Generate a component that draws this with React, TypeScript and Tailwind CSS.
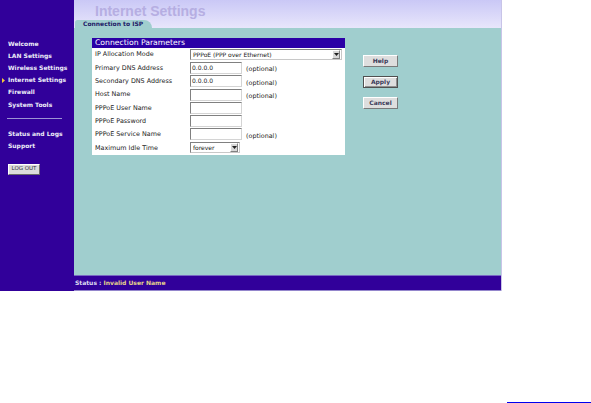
import React from "react";

type Row = {
  label: string;
  kind: "wide" | "input" | "small";
  value?: string;
  optional?: boolean;
};

const rows: Row[] = [
  { label: "IP Allocation Mode", kind: "wide", value: "PPPoE (PPP over Ethernet)" },
  { label: "Primary DNS Address", kind: "input", value: "0.0.0.0", optional: true },
  { label: "Secondary DNS Address", kind: "input", value: "0.0.0.0", optional: true },
  { label: "Host Name", kind: "input", value: "", optional: true },
  { label: "PPPoE User Name", kind: "input", value: "" },
  { label: "PPPoE Password", kind: "input", value: "" },
  { label: "PPPoE Service Name", kind: "input", value: "", optional: true },
  { label: "Maximum Idle Time", kind: "small", value: "forever" },
];

const nav1 = ["Welcome", "LAN Settings", "Wireless Settings", "Internet Settings", "Firewall", "System Tools"];
const nav2 = ["Status and Logs", "Support"];

function Arrow() {
  return (
    <div className="ml-auto mr-[1px] flex h-[9px] w-[8px] items-center justify-center border border-t-white border-l-white border-b-[#808080] border-r-[#808080] bg-[#d8d8d8]">
      <svg width="5" height="3" viewBox="0 0 5 3">
        <path d="M0 0 L5 0 L2.5 3 Z" fill="#202020" />
      </svg>
    </div>
  );
}

function Field({ row }: { row: Row }) {
  if (row.kind === "wide" || row.kind === "small") {
    return (
      <div
        className={
          (row.kind === "wide" ? "w-[152px]" : "w-[50px]") +
          " flex h-[11px] items-center border border-t-[#808080] border-l-[#808080] border-b-[#c8c8c8] border-r-[#c8c8c8] bg-white pl-[2px] text-[6px] leading-none text-[#202020]"
        }
      >
        <span>{row.value}</span>
        <Arrow />
      </div>
    );
  }
  return (
    <div className="flex h-[12px] w-[52px] items-center border border-t-[#808080] border-l-[#808080] border-b-[#d4d4d4] border-r-[#d4d4d4] bg-white pl-[1px] text-[6px] leading-none text-[#202020]">
      {row.value}
    </div>
  );
}

function Btn({ label, primary }: { label: string; primary?: boolean }) {
  return (
    <div
      className={
        "flex h-[12px] w-[35px] items-center justify-center bg-[#dedede] text-[6px] font-bold leading-none text-[#3a3a58] " +
        (primary
          ? "border border-[#505050] shadow-[inset_1px_1px_0_#ffffff,inset_-1px_-1px_0_#909090]"
          : "border border-t-white border-l-white border-b-[#7a7a7a] border-r-[#7a7a7a]")
      }
    >
      {label}
    </div>
  );
}

export default function App() {
  return (
    <div className="relative h-[403px] w-[591px] overflow-hidden bg-white font-['DejaVu_Sans',sans-serif]">
      <div className="flex h-[291px] w-[502px]">
        {/* Sidebar */}
        <div className="flex h-full w-[74px] flex-col bg-[#31009a] pt-[37.5px] text-[6px] font-bold text-[#ececf8]">
          {nav1.map((n) => (
            <div key={n} className="relative flex h-[12.2px] items-center pl-[8px] leading-none">
              {n === "Internet Settings" && (
                <svg className="absolute left-[2px] top-[3.6px]" width="3" height="5" viewBox="0 0 3 5">
                  <path d="M0 0 L3 2.5 L0 5 Z" fill="#f2c83a" />
                </svg>
              )}
              {n}
            </div>
          ))}
          <div className="ml-[7px] mt-[7px] h-[1px] w-[55px] bg-[#9c94d4]" />
          <div className="mt-[9.5px]">
            {nav2.map((n) => (
              <div key={n} className="flex h-[12.2px] items-center pl-[8px] leading-none">
                {n}
              </div>
            ))}
          </div>
          <div className="ml-[8px] mt-[11px] flex h-[11px] w-[32px] items-center justify-center border border-t-white border-l-white border-b-[#6a6a6a] border-r-[#6a6a6a] bg-[#dcdcdc] text-[5.5px] font-normal leading-none text-[#303040]">
            LOG OUT
          </div>
        </div>

        {/* Right column */}
        <div className="flex h-full w-[428px] flex-col border-r border-[#c8c4e8]">
          {/* Header */}
          <div className="flex h-[28px] flex-col bg-gradient-to-b from-[#cac8f6] to-[#e8e6fb]">
            <div className="pl-[21px] pt-[3px] font-['Liberation_Sans',sans-serif] text-[14px] font-bold leading-[16px] text-[#b6aee2]">
              Internet Settings
            </div>
            <div className="mt-auto ml-[1px] flex h-[8px] w-[77px] items-center rounded-tl-[3px] rounded-tr-[9px] bg-[#a0cece] pl-[8px] text-[6px] font-bold leading-none text-[#1e1a66]">
              Connection to ISP
            </div>
          </div>

          {/* Content */}
          <div className="flex flex-1 items-start bg-[#a0cece] pl-[18px] pt-[10px]">
            <div className="w-[253px] bg-white pb-[1px]">
              <div className="flex h-[10px] items-center bg-[#2b00a6] pl-[3px] text-[7.7px] leading-none text-white">
                Connection Parameters
              </div>
              {rows.map((r) => (
                <div key={r.label} className="flex h-[13.3px] items-center">
                  <div className="w-[98px] pl-[3px] text-[6.4px] leading-none text-[#222]">{r.label}</div>
                  <Field row={r} />
                  {r.optional && (
                    <div className="ml-[4px] pt-[3px] text-[6.4px] leading-none text-[#222]">(optional)</div>
                  )}
                </div>
              ))}
            </div>
            <div className="ml-[18px] mt-[17px] flex flex-col gap-[9px]">
              <Btn label="Help" />
              <Btn label="Apply" primary />
              <Btn label="Cancel" />
            </div>
          </div>

          {/* Status bar */}
          <div className="flex h-[16px] items-center border-t border-b border-t-[#7868c4] border-b-[#9486cc] bg-[#31009a] pl-[1px] text-[6px] font-bold leading-none">
            <span className="text-[#dcdcf0]">Status :&nbsp;</span>
            <span className="text-[#e6d48a]">Invalid User Name</span>
          </div>
        </div>
      </div>

      <div className="mt-[111px] flex justify-end">
        <div className="h-[1px] w-[84px] bg-[#0000ee]" />
      </div>
    </div>
  );
}
